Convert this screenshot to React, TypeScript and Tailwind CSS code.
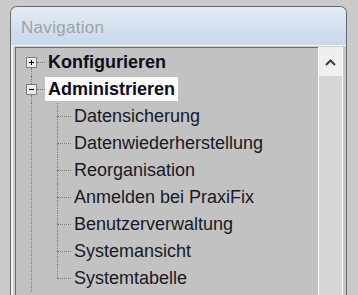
const FONT = { fontFamily: '"Liberation Sans", Arial, sans-serif' };

const children = [
  "Datensicherung",
  "Datenwiederherstellung",
  "Reorganisation",
  "Anmelden bei PraxiFix",
  "Benutzerverwaltung",
  "Systemansicht",
  "Systemtabelle",
];

function Box({ plus }: { plus: boolean }) {
  return (
    <div className="w-[11px] h-[11px] shrink-0 border border-[#7c7c7c] bg-[#ececec] flex items-center justify-center">
      <svg width="9" height="9" viewBox="0 0 9 9">
        <path d="M2 4.5H7" stroke="#000" strokeWidth="1" />
        {plus && <path d="M4.5 2V7" stroke="#000" strokeWidth="1" />}
      </svg>
    </div>
  );
}

export default function App() {
  return (
    <div
      className="w-[358px] h-[295px] overflow-hidden bg-[#cacaca] pl-[10px] pt-[6px]"
      style={FONT}
    >
      <div className="w-[337px] h-[300px] flex flex-col rounded-t-[7px] border-x border-t border-[#666a70] bg-[#cbcbcb]">
        <div className="h-[39px] shrink-0 rounded-t-[6px] bg-gradient-to-b from-[#e3ecf5] to-[#c6d8ea] border-b border-[#eef4fa] pl-[10px] pt-[2px] text-[17px] leading-[37px] tracking-[0.3px] text-[#a2a2a2]">
          Navigation
        </div>
        <div className="flex-1 flex border-l-2 border-[#f4f4f4] pl-[2px] pt-[1px]">
          <div className="w-[303px] border-l border-t border-[#6e6e6e] bg-[#c2c2c2] pt-[1px]">
            {/* Konfigurieren */}
            <div className="flex h-[27px] pl-[10px]">
              <div className="w-[11px] h-full flex flex-col items-center">
                <div className="h-[8px] shrink-0" />
                <Box plus />
                <div className="flex-1 w-0 border-l border-dotted border-[#7a7a7a]" />
              </div>
              <div className="w-[8px] h-full flex items-center">
                <div className="w-full h-0 border-t border-dotted border-[#7a7a7a]" />
              </div>
              <span className="px-[3px] font-bold text-[18px] leading-[27px] text-[#0c0c1c]">
                Konfigurieren
              </span>
            </div>
            {/* Administrieren */}
            <div className="flex h-[27px] pl-[10px]">
              <div className="w-[11px] h-full flex flex-col items-center">
                <div className="h-[8px] shrink-0 w-0 border-l border-dotted border-[#7a7a7a]" />
                <Box plus={false} />
                <div className="flex-1 w-0 border-l border-dotted border-[#7a7a7a]" />
              </div>
              <div className="w-[8px] h-full flex items-center">
                <div className="w-full h-0 border-t border-dotted border-[#7a7a7a]" />
              </div>
              <div className="pt-[1px]">
                <span className="block h-[24px] px-[3px] bg-[#fbfbfb] font-bold text-[18px] leading-[24px] text-[#0c0c1c]">
                  Administrieren
                </span>
              </div>
            </div>
            {/* children */}
            <div className="ml-[15px] border-l border-dotted border-[#7a7a7a]">
              {children.map((c, i) => {
                const last = i === children.length - 1;
                return (
                  <div key={c} className="flex h-[27px] pl-[25px]">
                    <div className="w-[14px] h-full flex flex-col">
                      <div className="h-[13px] shrink-0 border-l border-dotted border-[#7a7a7a]" />
                      <div className="h-0 w-full border-t border-dotted border-[#7a7a7a]" />
                      <div
                        className={
                          last
                            ? "flex-1"
                            : "flex-1 border-l border-dotted border-[#7a7a7a]"
                        }
                      />
                    </div>
                    <span className="pl-[3px] text-[18px] leading-[27px] text-[#181826] whitespace-nowrap">
                      {c}
                    </span>
                  </div>
                );
              })}
            </div>
          </div>
          <div className="w-[24px] border-l border-white bg-[#d6d6d6]">
            <div className="h-[29px] bg-[#efefef] flex items-center justify-center pt-[2px]">
              <svg width="11" height="7" viewBox="0 0 11 7">
                <polyline
                  points="1,6 5.5,1.5 10,6"
                  fill="none"
                  stroke="#3c3c3c"
                  strokeWidth="2"
                />
              </svg>
            </div>
          </div>
          <div className="w-[4px] border-l border-white bg-[#c6c6c6]" />
        </div>
      </div>
    </div>
  );
}
